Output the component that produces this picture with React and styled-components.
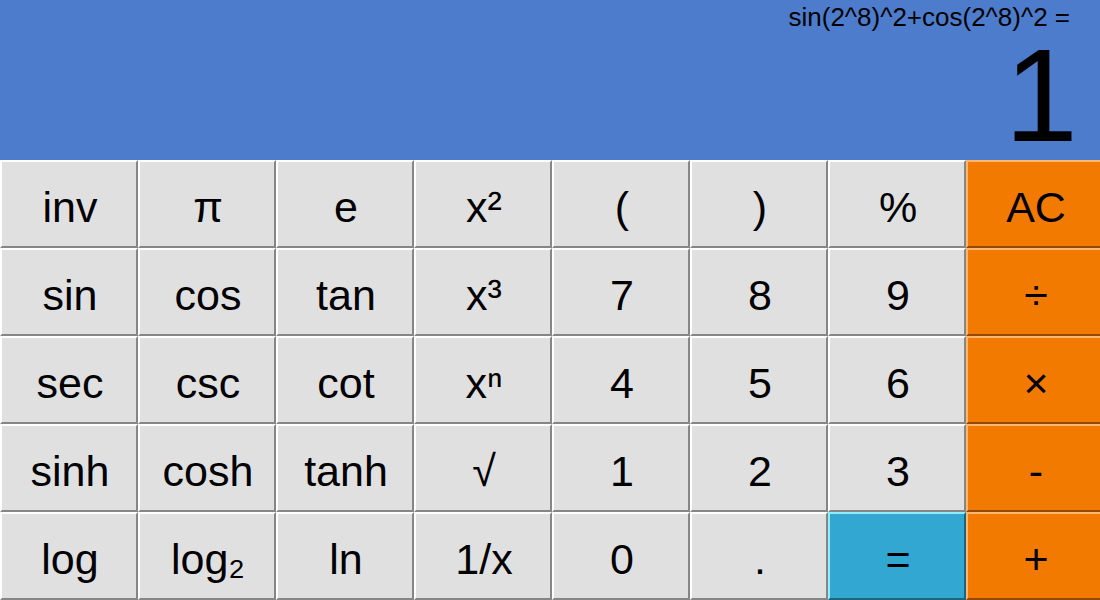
import React from "react";
import styled, { createGlobalStyle } from "styled-components";

const GlobalStyle = createGlobalStyle`
  * { box-sizing: border-box; }
  html, body { margin: 0; }
  body { font-family: "Liberation Sans", Arial, sans-serif; color: #000; }
`;

const Calculator = styled.main`
  display: grid;
  grid-template-columns: minmax(0, 1fr);
  grid-template-rows: auto 1fr;
  min-height: 100vh;
  overflow: hidden;
`;

const Display = styled.section`
  background: #4d7ccc;
  text-align: right;
  padding: 2px 22px 0;
`;

const Expression = styled.div`
  font-size: 26px;
  line-height: 30px;
  padding-right: 8px;
`;

const Result = styled.output`
  display: block;
  font-size: 132px;
  line-height: 128px;
`;

const Keypad = styled.div`
  display: grid;
  width: calc(100% + 4px);
  grid-template-columns: repeat(8, 1fr);
  grid-auto-rows: 1fr;
`;

const tones = {
  plain: { face: "#e0e0e0", light: "#ffffff", dark: "#868686" },
  operator: { face: "#f37a00", light: "#ffb771", dark: "#924a00" },
  equals: { face: "#32a7d2", light: "#8eeeff", dark: "#1e647e" },
};

const Key = styled.button`
  min-width: 0;
  margin: 0;
  padding: 6px 0 0 2px;
  border: 2px solid;
  border-color: ${({ $tone }) => {
    const { light, dark } = tones[$tone];
    return `${light} ${dark} ${dark} ${light}`;
  }};
  background: ${({ $tone }) => tones[$tone].face};
  color: #000;
  font-family: inherit;
  font-size: 43px;
  line-height: 48px;
`;

const rows = [
  ["inv", "π", "e", "x²", "(", ")", "%", "AC"],
  ["sin", "cos", "tan", "x³", "7", "8", "9", "÷"],
  ["sec", "csc", "cot", "xⁿ", "4", "5", "6", "×"],
  ["sinh", "cosh", "tanh", "√", "1", "2", "3", "-"],
  ["log", "log₂", "ln", "1/x", "0", ".", "=", "+"],
];

const toneOf = (label, column) =>
  label === "=" ? "equals" : column === 7 ? "operator" : "plain";

export default function App() {
  return (
    <Calculator>
      <GlobalStyle />
      <Display>
        <Expression>sin(2^8)^2+cos(2^8)^2 =</Expression>
        <Result>1</Result>
      </Display>
      <Keypad>
        {rows.flatMap((row) =>
          row.map((label, column) => (
            <Key key={label} type="button" $tone={toneOf(label, column)}>
              {label}
            </Key>
          ))
        )}
      </Keypad>
    </Calculator>
  );
}
